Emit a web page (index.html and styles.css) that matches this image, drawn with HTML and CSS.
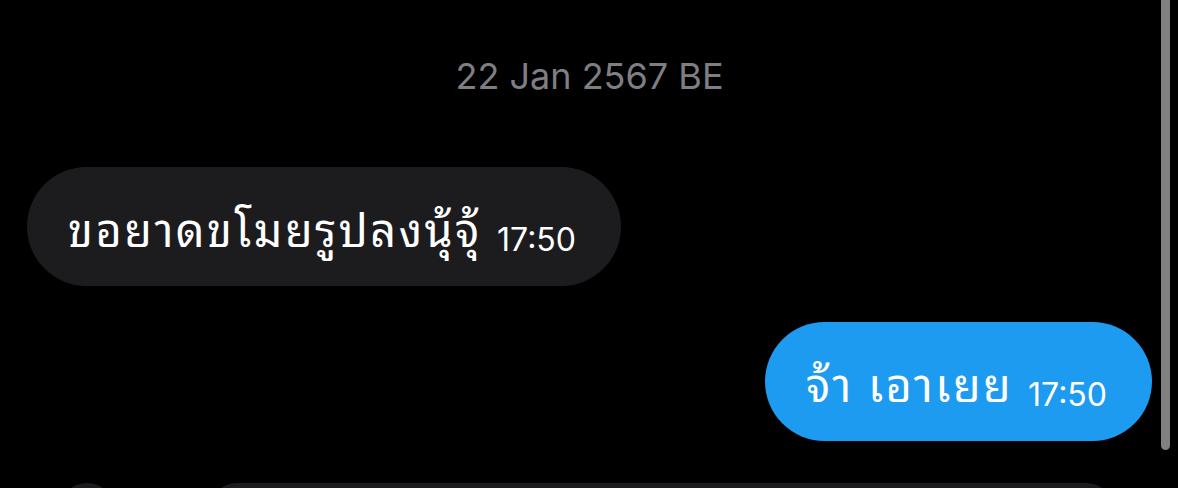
FILE: index.html
```html
<!DOCTYPE html>
<html lang="th">
<head>
<meta charset="utf-8">
<link rel="stylesheet" href="styles.css">
</head>
<body>
<div class="screen">
  <div class="chat">
    <div class="date">22 Jan 2567 BE</div>
    <div class="row in">
      <div class="bubble gray"><span class="msg">ขอยาดขโมยรูปลงนุ้จุ้</span><span class="time">17:50</span></div>
    </div>
    <div class="row out">
      <div class="bubble blue"><span class="msg">จ้า เอาเยย</span><span class="time">17:50</span></div>
    </div>
    <div class="composer">
      <div class="circle"></div>
      <div class="input"></div>
    </div>
  </div>
  <div class="scrollbar"></div>
</div>
</body>
</html>
```
FILE: styles.css
```css
html, body {
  margin: 0;
  padding: 0;
  background: #000;
}
body {
  width: 1178px;
  height: 488px;
  overflow: hidden;
  font-family: Inter, Roboto, "Noto Sans", "DejaVu Sans", sans-serif;
  color: #fff;
}
.screen {
  position: relative;
  width: 1178px;
  height: 488px;
  overflow: hidden;
}
.chat {
  display: flex;
  flex-direction: column;
  padding: 0 26px 0 27px;
}
.date {
  margin-top: 56px;
  height: 40px;
  text-align: center;
  color: #7e7e83;
  font-size: 36px;
  line-height: 40px;
}
.row {
  display: flex;
}
.row.in {
  margin-top: 71px;
  justify-content: flex-start;
}
.row.out {
  margin-top: 36px;
  justify-content: flex-end;
}
.bubble {
  display: flex;
  align-items: baseline;
  height: 119px;
  box-sizing: border-box;
  border-radius: 60px;
  padding: 0 45px 0 41px;
  line-height: 119px;
}
.bubble.gray {
  background: #1c1c1e;
  width: 594px;
}
.bubble.blue {
  background: #1d9bf0;
  width: 387px;
}
.msg {
  font-size: 45px;
  letter-spacing: 2.5px;
  font-family: "Noto Sans Thai Looped", "Loma", "Garuda", "Waree", "Sawasdee", "Noto Sans Thai", "Noto Sans", "DejaVu Sans", sans-serif;
  display: inline-block;
  transform: translateY(1px);
}
.time {
  font-size: 32px;
  margin-left: auto;
  display: inline-block;
  transform: translateY(5px);
}
.composer {
  display: flex;
  margin-top: 42px;
  gap: 96px;
  padding-left: 33px;
}
.circle {
  width: 54px;
  height: 54px;
  border-radius: 50%;
  background: #1c1c1e;
  flex: none;
}
.input {
  width: 903px;
  height: 54px;
  border-radius: 27px;
  background: #1c1c1e;
}
.scrollbar {
  position: absolute;
  top: -6px;
  left: 1161px;
  width: 9px;
  height: 456px;
  border-radius: 5px;
  background: #808080;
}
```
